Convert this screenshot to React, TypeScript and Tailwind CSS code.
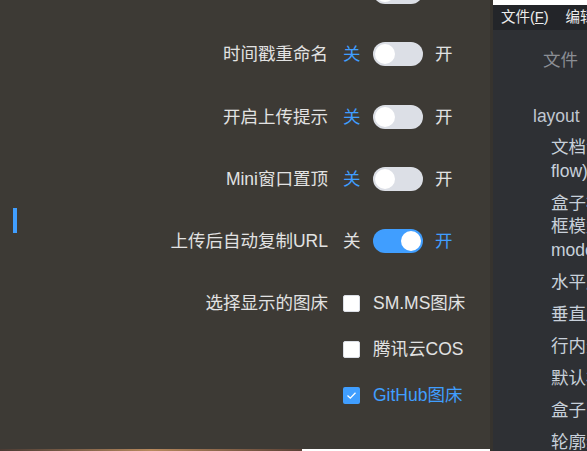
import React from "react";

const font = "font-['Liberation_Sans','Noto_Sans_CJK_SC',sans-serif]";

function Switch({ on }: { on: boolean }) {
  return (
    <div
      className={
        on
          ? "flex h-[24px] w-[50px] items-center justify-end rounded-full bg-[#409eff] px-[2px]"
          : "flex h-[24px] w-[50px] items-center justify-start rounded-full bg-[#dcdfe6] px-[2px]"
      }
    >
      <div className="h-[20px] w-[20px] rounded-full bg-white" />
    </div>
  );
}

function SwitchRow({ label, on }: { label?: string; on: boolean }) {
  // 顶部那一行只露出开关的下沿，文字都在可视区外
  if (!label) {
    return (
      <div className="flex h-[62.25px] items-center pl-[373px]">
        <Switch on={on} />
      </div>
    );
  }
  return (
    <div className="flex h-[62.25px] items-center">
      <div className="w-[328px] shrink-0 text-right text-[#e2e2e2]">{label}</div>
      <span className={on ? "ml-[15px] text-[#e2e2e2]" : "ml-[15px] text-[#409eff]"}>关</span>
      <div className="ml-[12.5px]">
        <Switch on={on} />
      </div>
      <span className={on ? "ml-[12px] text-[#409eff]" : "ml-[12px] text-[#e2e2e2]"}>开</span>
    </div>
  );
}

function Check({ label, checked }: { label: string; checked: boolean }) {
  return (
    <div className="flex h-[46px] items-center whitespace-nowrap">
      {checked ? (
        <div className="flex h-[17px] w-[17px] items-center justify-center rounded-[2px] bg-[#409eff]">
          <svg width="11" height="9" viewBox="0 0 11 9" fill="none">
            <path d="M1.5 4.5 L4.3 7.2 L9.5 1.8" stroke="white" strokeWidth="1.3" />
          </svg>
        </div>
      ) : (
        <div className="h-[17px] w-[17px] rounded-[2px] border border-[#dcdfe6] bg-white" />
      )}
      <span className={checked ? "ml-[13px] text-[#409eff]" : "ml-[13px] text-[#e2e2e2]"}>{label}</span>
    </div>
  );
}

const outline = [
  ["文档流(normal", "flow)"],
  ["盒子模型/边", "框模型(box", "model)"],
  ["水平居中"],
  ["垂直居中"],
  ["行内元素"],
  ["默认样式"],
  ["盒子阴影"],
  ["轮廓线"],
];

export default function App() {
  return (
    <div className={`flex h-[451px] w-[587px] overflow-hidden ${font}`}>
      {/* 设置面板 */}
      <div className="relative flex w-[493px] shrink-0 flex-col border-r-[3px] border-[#36332e] bg-[#3d3a35]">
        <div className="absolute left-[13px] top-[208px] h-[25px] w-[4px] bg-[#409eff]" />

        <div className="flex-1 overflow-hidden text-[17.5px] whitespace-nowrap">
          <div className="-mt-[39px]">
            <SwitchRow on={false} />
            <SwitchRow label="时间戳重命名" on={false} />
            <SwitchRow label="开启上传提示" on={false} />
            <SwitchRow label="Mini窗口置顶" on={false} />
            <SwitchRow label="上传后自动复制URL" on={true} />

            <div className="mt-[8px] flex">
              <div className="flex h-[46px] w-[328px] shrink-0 items-center justify-end text-[#e2e2e2]">
                选择显示的图床
              </div>
              <div className="ml-[15px] flex flex-col">
                <Check label="SM.MS图床" checked={false} />
                <Check label="腾讯云COS" checked={false} />
                <Check label="GitHub图床" checked={true} />
              </div>
            </div>
          </div>
        </div>

        <div className="flex h-[2px]">
          <div className="w-[302px] bg-gradient-to-r from-[#4a3a33] via-[#b98a5e] to-[#5b4136]" />
          <div className="flex-1 bg-white" />
        </div>
      </div>

      {/* 右侧编辑器 */}
      <div className="flex min-w-0 flex-1 flex-col overflow-hidden bg-[#2e3034]">
        <div className="h-[5px] shrink-0 bg-white" />
        <div className="flex h-[25px] shrink-0 items-center whitespace-nowrap bg-[#232529] pl-[8px] text-[14.5px] text-[#ececec]">
          <span>
            文件(<span className="underline">F</span>)
          </span>
          <span className="ml-[17px]">
            编辑(<span className="underline">E</span>)
          </span>
        </div>

        <div className="whitespace-nowrap text-[17.5px] leading-[23.5px]">
          <div className="pl-[50px] pt-[19px] text-[#8b8e94]">文件</div>
          <div className="mt-[32.75px] pl-[40px] text-[#c0c7d1]">layout</div>
          <div className="mt-[7.5px] flex flex-col gap-[8.5px] pl-[58px] text-[#c8d0da]">
            {outline.map((lines, i) => (
              <div key={i}>
                {lines.map((l, j) => (
                  <div key={j}>{l}</div>
                ))}
              </div>
            ))}
          </div>
        </div>
      </div>
    </div>
  );
}
